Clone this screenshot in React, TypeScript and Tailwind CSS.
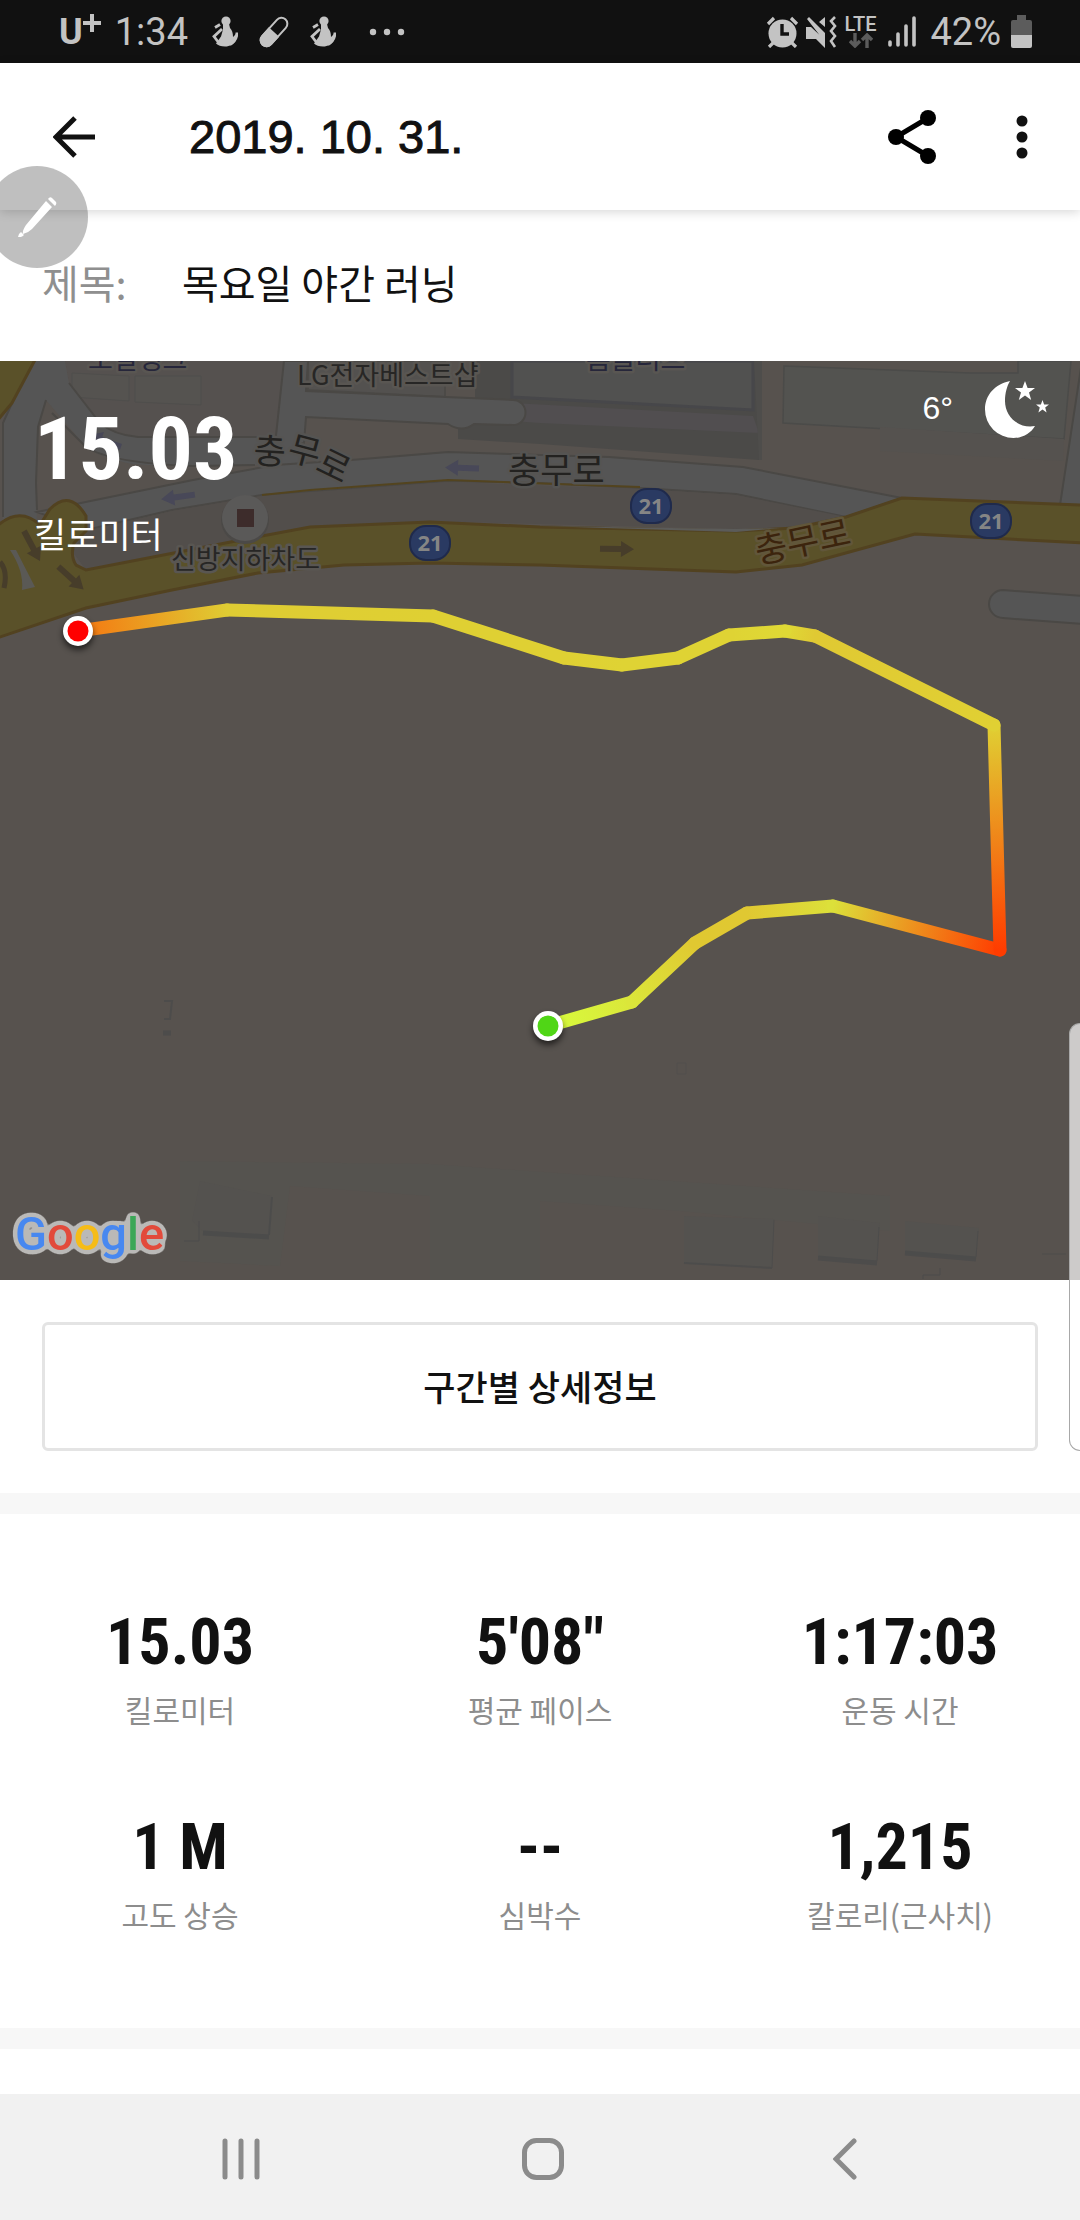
import React from "react";

type Point = { x: number; y: number; color: string };

type Stat = {
  value: string;
  label: string;
};

const stats: Stat[] = [
  { value: "15.03", label: "킬로미터" },
  { value: "5'08\"", label: "평균 페이스" },
  { value: "1:17:03", label: "운동 시간" },
  { value: "1 M", label: "고도 상승" },
  { value: "--", label: "심박수" },
  { value: "1,215", label: "칼로리(근사치)" },
];

// Colour follows pace: green is fast, red is slow.
const route: Point[] = [
  { x: 548, y: 665, color: "#d7fc3c" },
  { x: 632, y: 641, color: "#dbe63a" },
  { x: 695, y: 582, color: "#e0c831" },
  { x: 747, y: 552, color: "#e0c832" },
  { x: 833, y: 545, color: "#dce03a" },
  { x: 1000, y: 589, color: "#ff3c00" },
  { x: 994, y: 364, color: "#e0d033" },
  { x: 815, y: 275, color: "#e0c933" },
  { x: 785, y: 270, color: "#dfd935" },
  { x: 729, y: 274, color: "#dfd334" },
  { x: 678, y: 297, color: "#dfd334" },
  { x: 622, y: 304, color: "#dfd334" },
  { x: 564, y: 297, color: "#dfd033" },
  { x: 433, y: 255, color: "#dfd033" },
  { x: 227, y: 249, color: "#dfcc33" },
  { x: 78, y: 270, color: "#f57611" },
];

const condensed = "font-['Roboto_Condensed',Roboto,sans-serif]";
const korean = "font-['Noto_Sans_CJK_KR',sans-serif]";

function RunnerIcon() {
  return (
    <svg viewBox="0 0 26 31" className="h-[31px] w-[26px]" fill="currentColor">
      <circle cx="14" cy="5" r="4.6" />
      <path d="M11 8h6l1 4c2 2 3 5 3 9l3-3v6c-2 4-6 6.500-11 6.500-4 0-7-1-9-3l5-7 2-7z" />
      <path
        d="M10 13 2 20.500 7 27M3 11.500l5-3M25 16.500c0 5-2 9-7 12"
        fill="none"
        stroke="currentColor"
        strokeWidth="2.800"
      />
    </svg>
  );
}

function PillIcon() {
  return (
    <svg viewBox="0 0 32 32" className="size-8" fill="none">
      <g transform="rotate(42 16 16)">
        <rect x="10" y="-1" width="12" height="34" rx="6" stroke="currentColor" strokeWidth="2" />
        <path d="M9 16h14v11a7 7 0 0 1-14 0z" fill="currentColor" />
      </g>
    </svg>
  );
}

function StatusBar() {
  return (
    <header className="flex h-[63px] items-center justify-between bg-[#111] pr-12 pl-[59px] font-[Roboto,sans-serif] text-[38px] leading-none text-[#c3c3c3]">
      <div className="flex items-center">
        <span className="flex items-start font-bold">
          <span className="text-[36px]">U</span>
          <svg viewBox="0 0 18 18" className="size-[18px]" aria-label="+">
            <path d="M9 0v18M0 9h18" stroke="currentColor" strokeWidth="4" />
          </svg>
        </span>
        <time className="ml-[14px]">1:34</time>
        <span className="ml-6 flex items-center gap-5">
          <RunnerIcon />
          <PillIcon />
          <RunnerIcon />
        </span>
        <svg viewBox="0 0 36 8" className="ml-[33px] h-2 w-9" fill="currentColor">
          <circle cx="4" cy="4" r="3.200" />
          <circle cx="18" cy="4" r="3.200" />
          <circle cx="32" cy="4" r="3.200" />
        </svg>
      </div>
      <div className="flex items-center">
        <svg viewBox="0 0 33 32" className="h-8 w-[33px]">
          <circle cx="16.500" cy="17.500" r="14" fill="currentColor" />
          <path d="M2 8l6-6M31 8l-6-6M3 31l5-5M30 31l-5-5" stroke="currentColor" strokeWidth="3.200" />
          <path d="M16 8v10h7" fill="none" stroke="#111" strokeWidth="3.400" />
        </svg>
        <svg viewBox="0 0 32 32" className="ml-[6px] size-8" fill="currentColor">
          <path d="M1 11h5l14 13v8l-9-9H1zM4 1l16 16v9L2 3zM20 1v10l-6-5z" />
          <path
            d="M30 1l-4 4 4 5-4 5 4 5-4 5 4 6"
            fill="none"
            stroke="currentColor"
            strokeWidth="2.600"
          />
        </svg>
        <span className="ml-2 flex flex-col items-center text-[20px] leading-[17px] font-medium">
          LTE
          <svg viewBox="0 0 24 15" className="h-[15px] w-6 text-[#5c5c5c]" fill="none">
            <path
              d="M6 0v12M1 8l5 5 5-5M18 15V3M13 7l5-5 5 5"
              stroke="currentColor"
              strokeWidth="3.400"
            />
          </svg>
        </span>
        <svg viewBox="0 0 28 31" className="ml-3 h-[31px] w-7">
          <path
            d="M2 26v3M10 18v11M18 10v19M26 2v27"
            stroke="currentColor"
            strokeWidth="3.600"
            strokeLinecap="round"
          />
        </svg>
        <span className="ml-[14px]">42%</span>
        <svg viewBox="0 0 21 33" className="ml-[10px] h-[33px] w-[21px]">
          <path d="M6 0h9v5h4a2 2 0 0 1 2 2v13H0V7a2 2 0 0 1 2-2h4z" fill="#5c5c5c" />
          <path d="M0 20h21v11a2 2 0 0 1-2 2H2a2 2 0 0 1-2-2z" fill="currentColor" />
        </svg>
      </div>
    </header>
  );
}

function AppBar() {
  return (
    <div className="relative flex h-[147px] items-center bg-white pr-[52px] pl-[53px] text-[#111] shadow-[0_2px_10px_rgba(0,0,0,0.16)]">
      <button type="button" aria-label="뒤로">
        <svg viewBox="0 0 42 42" className="size-[42px]" fill="none">
          <path d="M42 21H4M22 2 3 21l19 19" stroke="currentColor" strokeWidth="5" />
        </svg>
      </button>
      <h1 className="ml-[94px] grow font-['Liberation_Sans',sans-serif] text-[47px] leading-none [-webkit-text-stroke:1px_#111]">
        2019. 10. 31.
      </h1>
      <button type="button" aria-label="공유" className="text-black">
        <svg viewBox="0 0 48 54" className="h-[54px] w-12" fill="currentColor">
          <path d="M40 8 8 27l32 19" fill="none" stroke="currentColor" strokeWidth="5" />
          <circle cx="40" cy="8" r="8" />
          <circle cx="8" cy="27" r="8" />
          <circle cx="40" cy="46" r="8" />
        </svg>
      </button>
      <button type="button" aria-label="더보기" className="ml-20">
        <svg viewBox="0 0 12 44" className="h-11 w-3" fill="currentColor">
          <circle cx="6" cy="6" r="5.500" />
          <circle cx="6" cy="22" r="5.500" />
          <circle cx="6" cy="38" r="5.500" />
        </svg>
      </button>
    </div>
  );
}

function RoadBadge({ x, y }: { x: number; y: number }) {
  return (
    <g>
      <rect x={x - 20} y={y - 17} width="40" height="34" rx="16" fill="#2a3a62" stroke="#1f2a4c" strokeWidth="2" />
      <text x={x} y={y + 8} textAnchor="middle" fontSize="22" fontWeight="700" fill="#858585" className="font-['Open_Sans',sans-serif]">
        21
      </text>
    </g>
  );
}

function Arrow({ x, y, angle, color }: { x: number; y: number; angle: number; color: string }) {
  return (
    <path
      d="M-17-3H4v-5L17 0 4 8V3h-21z"
      fill={color}
      transform={`translate(${x} ${y}) rotate(${angle})`}
    />
  );
}

function Marker({ x, y, color }: { x: number; y: number; color: string }) {
  return (
    <g>
      <circle cx={x} cy={y + 4} r="15" fill="#000" opacity="0.6" filter="url(#soft)" />
      <circle cx={x} cy={y} r="15" fill="#fff" />
      <circle cx={x} cy={y} r="10.500" fill={color} />
    </g>
  );
}

function RouteMap() {
  return (
    <svg viewBox="0 0 1080 919" className={`block h-auto w-full ${korean}`} role="img" aria-label="러닝 경로">
      <defs>
        <filter id="soft" x="-50%" y="-50%" width="200%" height="200%">
          <feGaussianBlur stdDeviation="3" />
        </filter>
        <filter id="outline" x="-10%" y="-20%" width="120%" height="140%" colorInterpolationFilters="sRGB">
          <feGaussianBlur in="SourceAlpha" stdDeviation="3" />
          <feComponentTransfer result="grown">
            <feFuncA type="linear" slope="20" intercept="-1" />
          </feComponentTransfer>
          <feFlood floodColor="#bab9b7" />
          <feComposite in2="grown" operator="in" result="halo" />
          <feMerge>
            <feMergeNode in="halo" />
            <feMergeNode in="SourceGraphic" />
          </feMerge>
        </filter>
        {route.slice(1).map((p, i) => (
          <linearGradient
            key={i}
            id={`leg-${i}`}
            gradientUnits="userSpaceOnUse"
            x1={route[i].x}
            y1={route[i].y}
            x2={p.x}
            y2={p.y}
          >
            <stop stopColor={route[i].color} />
            <stop offset="1" stopColor={p.color} />
          </linearGradient>
        ))}
      </defs>

      <rect width="1080" height="919" fill="#57524e" />

      {/* blocks and buildings */}
      <path d="M65 0H284L275 76H138L100 66 69 22z" fill="#55514f" />
      <path d="M72 12 129 15V40L72 36zM135 15H201V44L135 41z" fill="#555350" stroke="#4f4e4c" />
      <path d="M308 0H445V36L308 29z" fill="#53514f" stroke="#4c4a47" strokeWidth="2" />
      <path d="M475 0H759V99L540 83 458 78V62L475 60z" fill="#4b4a48" />
      <path d="M512 0H753V49L512 36z" fill="#515150" stroke="#47474a" strokeWidth="3" />
      <path d="M512 42 753 55 759 72 540 62 512 60z" fill="#514e50" />
      <path d="M754 0H762V99H759z" fill="#4e4d4b" />
      <path d="M784 5 970 12 1018 12V0H1071L1064 78 783 62z" fill="#535350" stroke="#4b4b49" strokeWidth="1.500" />
      <path d="M880 66 1064 78 1063 100 880 90z" fill="#55524f" />

      {/* local roads */}
      <g fill="#555" stroke="#4a4845" strokeWidth="2">
        <path d="M284 0H308L306 30 513 39A12 12 0 0 1 513 64L474 63Q462 72 448 63L306 56 304 82 275 84z" />
        <path d="M36 0H65L69 22 100 62Q114 74 138 76H300V104H193Q140 105 127 102 100 96 86 86L46 39Q38 60 38 70 35 90 37 162H3V62z" stroke="none" />
        <path d="M46 39 38 66 36 122 37 149M69 22 100 62Q114 74 138 76H275M52 52 86 86Q110 102 193 105L255 104M12 42 3 62V156" fill="none" />
        <path d="M37 151 193 119 275 104 351 99 448 91 540 94 609 96 743 106 902 137 846 156 736 133 640 127 540 122 448 120 310 131 262 134 172 149 86 169z" />
        <path d="M1082 0 1060 144 1082 150z" />
        <path d="M1082 235 1003 229A14 14 0 0 0 1003 257L1082 263z" />
      </g>
      <path d="M86 170 172 150 262 135 310 131 448 121 640 128 736 134 846 156 795 166 736 168 540 163 430 160 310 165 241 178 86 209 72 190z" fill="#524e4b" />
      <path d="M262 134 310 129 448 119 640 126" fill="none" stroke="#53441f" strokeWidth="2" />

      {/* highway */}
      <g fill="#5a5129" stroke="#524220" strokeWidth="3">
        <path d="M-3-3H36L12 42-3 60z" />
        <path d="M-3 165Q20 145 40 164L50 148Q70 128 86 155V170L74 182Q70 195 76 204L86 209 241 179 310 166 430 161 540 166 736 170 795 167 846 156 902 137 1083 144V182L915 173 802 204 736 211 540 204 430 202 344 204 258 212 172 229 86 247-3 277z" />
      </g>
      <path d="M540 165 736 168 780 167 736 171z" fill="#5b5b59" />
      <path d="M10 189H16L35 226 22 229Q24 210 10 189z" fill="#5a5955" />

      <Arrow x={178} y={136} angle={172} color="#484858" />
      <Arrow x={462} y={107} angle={182} color="#484858" />
      <Arrow x={105} y={80} angle={200} color="#484858" />
      <Arrow x={617} y={188} angle={1} color="#473d2a" />
      <Arrow x={32} y={185} angle={62} color="#473d2a" />
      <Arrow x={71} y={217} angle={42} color="#473d2a" />
      <path d="M4 227Q8 210 0 201" fill="none" stroke="#473d2a" strokeWidth="5" />

      <circle cx="245" cy="159" r="24" fill="#4b4947" />
      <circle cx="245" cy="157" r="23" fill="#5a5958" />
      <rect x="237" y="148" width="17" height="18" fill="#3d2c2b" />

      {/* place names */}
      <g fontSize="27" fill="#272625" stroke="#595652" strokeWidth="5" strokeLinejoin="round" paintOrder="stroke">
        <text x="88" y="8" fill="#26263a">오일뱅크</text>
        <text x="586" y="8" fill="#26263a">홈플러스</text>
        <text x="297" y="24">LG전자베스트샵</text>
        <text x="171" y="208">신방지하차도</text>
      </g>
      <g fontSize="35" fill="#232220" stroke="#555452" strokeWidth="5" strokeLinejoin="round" paintOrder="stroke">
        <text x="253" y="102" rotate="3 15 26">
          <tspan>충</tspan>
          <tspan x="286" y="98">무</tspan>
          <tspan x="314" y="109">로</tspan>
        </text>
        <text x="508" y="122">충무로</text>
        <text x="758" y="203" transform="rotate(-12 758 203)" fill="#3c240d" stroke="#61563a">
          충무로
        </text>
      </g>
      <RoadBadge x={430} y={182} />
      <RoadBadge x={651} y={145} />
      <RoadBadge x={991} y={160} />

      {/* faint buildings south of the route */}
      <path d="M180 800 430 803 600 815 890 835 890 870 680 850 540 840V919H430V835L290 825 280 905 180 900z" fill="#55534f" />
      <path d="M192 860 200 820 272 835 269 874 203 870zM684 855 774 858 772 906 684 902zM818 855 880 862 877 900 818 896zM905 860 979 867 976 898 905 893z" fill="#54524f" />
      <g fill="none" stroke="#4b4b4b" opacity="0.8">
        <path d="M203 872 269 876M818 897 877 902M905 892 976 898M163 672H171" strokeWidth="5" />
        <path d="M272 836 269 874M684 902 772 907M164 640H172L170 658H164" strokeWidth="2" />
        <path d="M774 859 772 907M879 866 877 900M978 870 976 896M1042 893H1066M923 918V914H940V907M184 880H199V860" strokeWidth="1" />
        <path d="M677 702H686V713H677z" opacity="0.5" />
      </g>

      <g strokeWidth="13" strokeLinecap="round">
        {route.slice(1).map((p, i) => (
          <line key={i} x1={route[i].x} y1={route[i].y} x2={p.x} y2={p.y} stroke={`url(#leg-${i})`} />
        ))}
      </g>
      <Marker x={548} y={665} color="#50d616" />
      <Marker x={78} y={270} color="#f00" />

      <text x="15" y="889" fontSize="47" fontWeight="500" filter="url(#outline)" className="font-[Roboto,sans-serif]">
        <tspan fill="#4888f0">G</tspan>
        <tspan fill="#e24a3b">o</tspan>
        <tspan fill="#f6bc17">o</tspan>
        <tspan fill="#4888f0">g</tspan>
        <tspan fill="#3ba757">l</tspan>
        <tspan fill="#e24a3b">e</tspan>
      </text>
    </svg>
  );
}

function MapPanel() {
  return (
    <section className="relative">
      <RouteMap />
      <div className="absolute inset-0 flex items-start justify-between pt-5 pr-[31px] pl-[34px] text-white">
        <div>
          <p className={`mt-5 text-[88px] leading-[96px] font-bold ${condensed}`}>15.03</p>
          <p className={`mt-4 text-[35px] leading-10 ${korean}`}>킬로미터</p>
        </div>
        <div className="flex items-center gap-8">
          <span className="pb-1 font-['Liberation_Sans',sans-serif] text-[32px] leading-none">6°</span>
          <svg viewBox="0 0 64 57" className="h-[57px] w-16" fill="currentColor">
            <path d="M25 0C10 3 0 14 0 28.500A28.500 28.500 0 0 0 28.500 57C38 57 46 52 50 45 34 48 20 36 20 20 20 12 22 5 25 0z" />
            <path d="M40 0l2.600 7H50l-6 4.600 2.200 7.400-6.200-4.400-6.200 4.400L36 11.600 30 7h7.400zM57.500 19l1.600 4.500H64l-3.800 3 1.400 5-4.100-3-4.100 3 1.400-5-3.800-3h4.900z" />
          </svg>
        </div>
      </div>
    </section>
  );
}

function StatCell({ stat }: { stat: Stat }) {
  return (
    <div className="flex flex-col-reverse items-center">
      <dt className={`mt-2 text-[30px] leading-[44px] text-[#8d8d8d] ${korean}`}>{stat.label}</dt>
      <dd className={`text-[64px] leading-[72px] font-bold text-[#111] ${condensed}`}>{stat.value}</dd>
    </div>
  );
}

function NavigationBar() {
  return (
    <nav className="mt-auto grid h-[126px] grid-cols-3 place-items-center bg-[#f1f1f1] pt-1 pr-[84px] pl-[90px] text-[#8b8b8b]">
      <button type="button" aria-label="최근 앱">
        <svg viewBox="0 0 40 42" className="h-[42px] w-10">
          <path d="M4 3v36M20 3v36M36 3v36" stroke="currentColor" strokeWidth="5" strokeLinecap="round" />
        </svg>
      </button>
      <button type="button" aria-label="홈">
        <svg viewBox="0 0 42 42" className="size-[42px]" fill="none">
          <rect x="2.500" y="2.500" width="37" height="37" rx="12" stroke="currentColor" strokeWidth="5" />
        </svg>
      </button>
      <button type="button" aria-label="뒤로 가기">
        <svg viewBox="0 0 24 42" className="h-[42px] w-6" fill="none">
          <path d="M21 3 3 21l18 18" stroke="currentColor" strokeWidth="5" strokeLinecap="round" />
        </svg>
      </button>
    </nav>
  );
}

export default function App() {
  return (
    <div className="relative flex min-h-screen flex-col overflow-hidden bg-white">
      <StatusBar />
      <AppBar />
      <div className={`flex h-[151px] items-center px-[42px] pb-2 text-[40px] leading-[60px] ${korean}`}>
        <label htmlFor="run-title" className="w-[140px] text-[#8f8f8f]">
          제목:
        </label>
        <input
          id="run-title"
          defaultValue="목요일 야간 러닝"
          className="min-w-0 grow bg-transparent text-[#111] outline-none"
        />
      </div>
      <MapPanel />
      <section className="border-b-[21px] border-[#f7f7f7] p-[42px]">
        <button
          type="button"
          className={`h-[129px] w-full rounded-md border-[3px] border-[#e4e4e4] text-[35px] font-medium text-[#111] ${korean}`}
        >
          구간별 상세정보
        </button>
      </section>
      <dl className="grid grid-cols-3 gap-y-[81px] border-b-[21px] border-[#f7f7f7] pt-[93px] pb-[92px]">
        {stats.map((stat) => (
          <StatCell key={stat.label} stat={stat} />
        ))}
      </dl>
      <NavigationBar />

      <button
        type="button"
        aria-label="제목 편집"
        className="absolute top-[166px] -left-[14px] flex size-[102px] items-center justify-center rounded-full bg-black/25 text-white"
      >
        <svg viewBox="0 0 40 40" className="size-10" fill="currentColor">
          <path d="M29 4l6 6-20 22q-4 4-9 5-1-3 3-9zM31 2q2-3 4-1l4 4q1 2-1 4zM4 35l3 3q-3 3-6 2 0-3 3-5z" />
        </svg>
      </button>
      <div className="absolute top-[1023px] right-0 h-[428px] w-[11px] rounded-l-[14px] border border-r-0 border-[#a8a8a8] bg-white/70" />
    </div>
  );
}
